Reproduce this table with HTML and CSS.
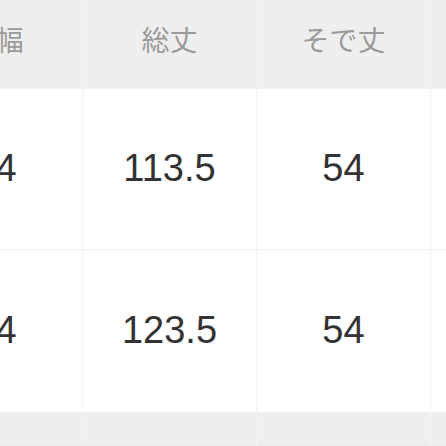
FILE: index.html
```html
<!DOCTYPE html>
<html lang="ja">
<head>
<meta charset="utf-8">
<title>サイズ表</title>
<link rel="stylesheet" href="styles.css">
</head>
<body>
<div class="size-table">
  <div class="cell head">身幅</div>
  <div class="cell head">総丈</div>
  <div class="cell head">そで丈</div>
  <div class="cell head"></div>

  <div class="cell data">54</div>
  <div class="cell data">113.5</div>
  <div class="cell data">54</div>
  <div class="cell data"></div>

  <div class="cell data row2">54</div>
  <div class="cell data row2">123.5</div>
  <div class="cell data row2">54</div>
  <div class="cell data row2"></div>

  <div class="cell foot"></div>
  <div class="cell foot"></div>
  <div class="cell foot"></div>
  <div class="cell foot"></div>

  <div class="cell foot2"></div>
  <div class="cell foot2"></div>
  <div class="cell foot2"></div>
  <div class="cell foot2"></div>
</div>
</body>
</html>
```

FILE: styles.css
```css
html, body {
  margin: 0;
  padding: 0;
  background: #ffffff;
  overflow: hidden;
}

.size-table {
  display: grid;
  grid-template-columns: repeat(4, 173px);
  grid-template-rows: 88px 160px 162px 28px 20px;
  gap: 1px;
  background: #f2f2f2;
  margin-left: -91px;
  width: max-content;
}

.cell {
  display: flex;
  align-items: center;
  justify-content: center;
  white-space: nowrap;
}

.head {
  background: #eeeeee;
  color: #9a9a9a;
  font-family: "Noto Sans CJK JP", "Noto Sans", sans-serif;
  font-size: 28px;
  padding-bottom: 10px;
  box-sizing: border-box;
}

.data {
  background: #ffffff;
  color: #333333;
  font-family: "Liberation Sans", Arial, sans-serif;
  font-size: 38px;
  padding-bottom: 2px;
  box-sizing: border-box;
}

.foot {
  background: #eeeeee;
}

.foot2 {
  background: #ebebeb;
}
```
